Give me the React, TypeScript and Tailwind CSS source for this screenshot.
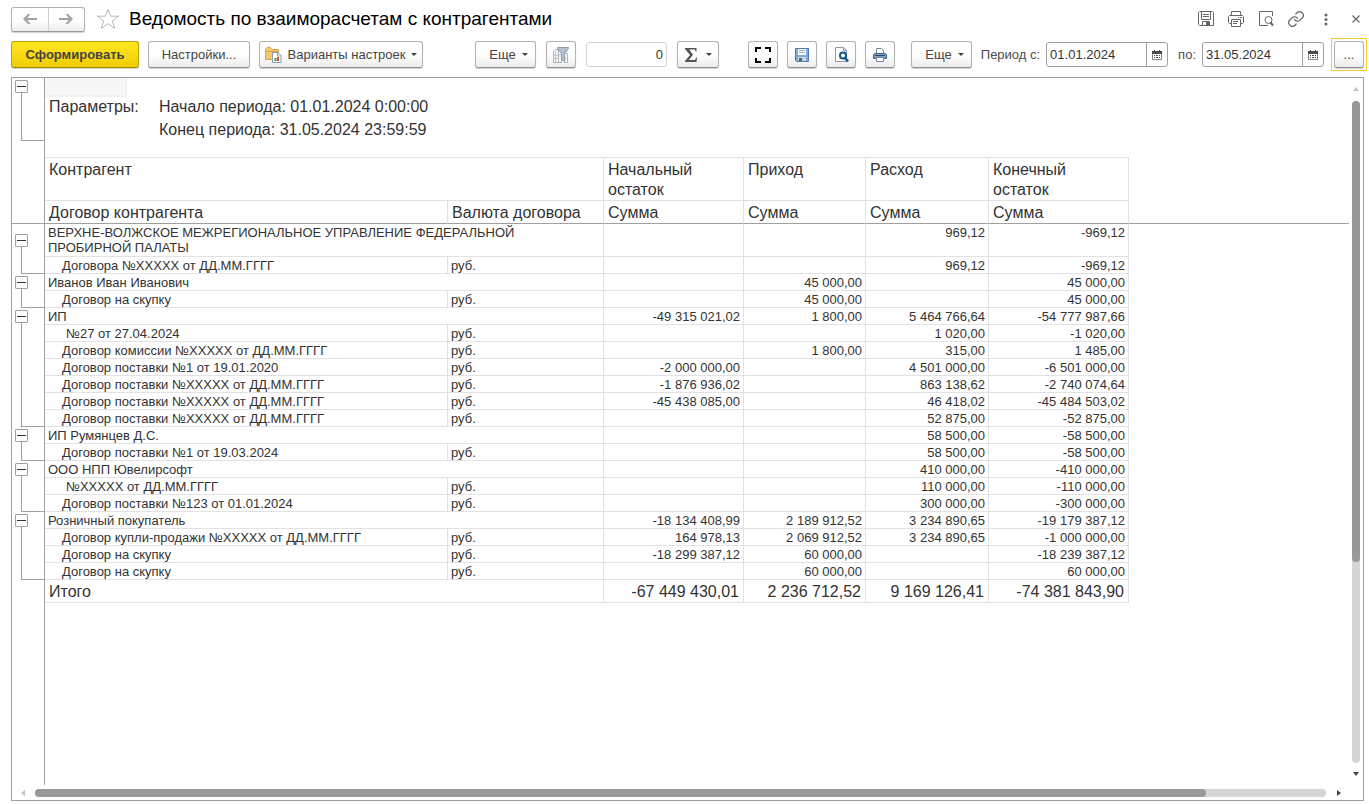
import type { ReactNode } from "react";

type Row = {
  name: string;
  level: 0 | 1;
  indent?: boolean;
  tall?: boolean;
  last?: boolean;
  sums: [string, string, string, string];
};

const rows: Row[] = [
  { name: "ВЕРХНЕ-ВОЛЖСКОЕ МЕЖРЕГИОНАЛЬНОЕ УПРАВЛЕНИЕ ФЕДЕРАЛЬНОЙ\nПРОБИРНОЙ ПАЛАТЫ", level: 0, tall: true, sums: ["", "", "969,12", "-969,12"] },
  { name: "Договора №XXXXX от ДД.ММ.ГГГГ", level: 1, last: true, sums: ["", "", "969,12", "-969,12"] },
  { name: "Иванов Иван Иванович", level: 0, sums: ["", "45 000,00", "", "45 000,00"] },
  { name: "Договор на скупку", level: 1, last: true, sums: ["", "45 000,00", "", "45 000,00"] },
  { name: "ИП", level: 0, sums: ["-49 315 021,02", "1 800,00", "5 464 766,64", "-54 777 987,66"] },
  { name: "№27 от 27.04.2024", level: 1, indent: true, sums: ["", "", "1 020,00", "-1 020,00"] },
  { name: "Договор комиссии №XXXXX от ДД.ММ.ГГГГ", level: 1, sums: ["", "1 800,00", "315,00", "1 485,00"] },
  { name: "Договор поставки №1 от 19.01.2020", level: 1, sums: ["-2 000 000,00", "", "4 501 000,00", "-6 501 000,00"] },
  { name: "Договор поставки №XXXXX от ДД.ММ.ГГГГ", level: 1, sums: ["-1 876 936,02", "", "863 138,62", "-2 740 074,64"] },
  { name: "Договор поставки №XXXXX от ДД.ММ.ГГГГ", level: 1, sums: ["-45 438 085,00", "", "46 418,02", "-45 484 503,02"] },
  { name: "Договор поставки №XXXXX от ДД.ММ.ГГГГ", level: 1, last: true, sums: ["", "", "52 875,00", "-52 875,00"] },
  { name: "ИП Румянцев Д.С.", level: 0, sums: ["", "", "58 500,00", "-58 500,00"] },
  { name: "Договор поставки №1 от 19.03.2024", level: 1, last: true, sums: ["", "", "58 500,00", "-58 500,00"] },
  { name: "ООО НПП Ювелирсофт", level: 0, sums: ["", "", "410 000,00", "-410 000,00"] },
  { name: "№XXXXX от ДД.ММ.ГГГГ", level: 1, indent: true, sums: ["", "", "110 000,00", "-110 000,00"] },
  { name: "Договор поставки №123 от 01.01.2024", level: 1, last: true, sums: ["", "", "300 000,00", "-300 000,00"] },
  { name: "Розничный покупатель", level: 0, sums: ["-18 134 408,99", "2 189 912,52", "3 234 890,65", "-19 179 387,12"] },
  { name: "Договор купли-продажи №XXXXX от ДД.ММ.ГГГГ", level: 1, sums: ["164 978,13", "2 069 912,52", "3 234 890,65", "-1 000 000,00"] },
  { name: "Договор на скупку", level: 1, sums: ["-18 299 387,12", "60 000,00", "", "-18 239 387,12"] },
  { name: "Договор на скупку", level: 1, last: true, sums: ["", "60 000,00", "", "60 000,00"] },
];

const totals = ["-67 449 430,01", "2 236 712,52", "9 169 126,41", "-74 381 843,90"];

const buttonBase =
  "flex h-[27px] shrink-0 items-center justify-center whitespace-nowrap rounded-[3px] border border-[#b2b2b2] border-b-[#8f8f8f] bg-linear-to-b from-white from-50% to-[#ececec] text-[13px] text-[#444444] shadow-[0_1px_1px_#d0d0d0]";

function IconButton({ label, children }: { label: string; children: ReactNode }) {
  return (
    <button type="button" aria-label={label} className={`${buttonBase} w-[30px]`}>
      {children}
    </button>
  );
}

function Caret() {
  return (
    <svg width="6" height="3" viewBox="0 0 6 3" fill="#444444" aria-hidden="true">
      <path d="M0 0h6L3 3z" />
    </svg>
  );
}

function Toggle() {
  return (
    <button
      type="button"
      aria-label="Свернуть группу"
      className="flex size-[13px] shrink-0 items-center justify-center rounded-[1px] border border-[#a0a0a0] bg-white"
    >
      <span className="h-px w-[9px] bg-[#333333]" />
    </button>
  );
}

function GroupMark({ row }: { row: Row }) {
  if (row.level === 0) {
    return (
      <div className="ml-[3px] flex h-full w-[13px] flex-col items-center">
        <span className="flex-1" />
        <Toggle />
        <span className="w-px flex-1 bg-[#a0a0a0]" />
      </div>
    );
  }
  return <div className={`ml-[9px] h-full border-l border-[#a0a0a0] ${row.last ? "border-b" : ""}`} />;
}

function DateField({ id, label, value }: { id: string; label: string; value: string }) {
  return (
    <div className="flex items-center gap-[6px]">
      <label htmlFor={id} className="whitespace-nowrap text-[#4d4d4d]">
        {label}
      </label>
      <div className="flex h-[25px] w-[122px] items-stretch rounded-[3px] border border-[#a0a0a0] bg-white">
        <input id={id} type="text" defaultValue={value} className="w-0 min-w-0 flex-1 px-[3px] text-[13px] text-[#333333] outline-none" />
        <button type="button" aria-label="Выбрать дату" className="flex w-[21px] items-center justify-center border-l border-[#a0a0a0]">
          <svg width="10" height="10" viewBox="0 0 10 10" aria-hidden="true" shapeRendering="crispEdges">
            <path fill="#4a4a4a" d="M2 0h1v1h4V0h1v1h2v3H0V1h2z" />
            <path fill="#8a8a8a" d="M0 4h1v5h8V4h1v6H0z" />
            <path fill="#4a4a4a" d="M2 5h1v1H2zM4 5h2v1H4zM7 5h1v1H7zM2 7h1v1H2zM4 7h2v1H4zM7 7h1v1H7z" />
          </svg>
        </button>
      </div>
    </div>
  );
}

function TitleIcon({ label, children }: { label: string; children: ReactNode }) {
  return (
    <button type="button" aria-label={label} className="flex size-4 items-center justify-center text-[#666666]">
      {children}
    </button>
  );
}

function TitleBar() {
  return (
    <header className="flex h-[38px] items-center">
      <div className="flex h-[25px] w-[74px] rounded-[3px] border border-[#b2b2b2] border-b-[#999999] bg-linear-to-b from-white from-50% to-[#eeeeee] shadow-[0_1px_1px_#d0d0d0]">
        <button type="button" aria-label="Назад" className="flex flex-1 items-center justify-center border-r border-[#d0d0d0]">
          <svg width="14" height="10" viewBox="0 0 14 10" fill="#a3a3a3" aria-hidden="true">
            <path d="M0 5l5-5h2.500L4.500 4H14v2H4.500l3 4H5z" />
          </svg>
        </button>
        <button type="button" aria-label="Вперед" className="flex flex-1 items-center justify-center">
          <svg width="14" height="10" viewBox="0 0 14 10" fill="#a3a3a3" aria-hidden="true">
            <path d="M14 5L9 0H6.500l3 4H0v2h9.500l-3 4H9z" />
          </svg>
        </button>
      </div>
      <button type="button" aria-label="В избранное" className="ml-[11px]">
        <svg width="24" height="22" viewBox="0 0 24 22" fill="white" stroke="#b4bac2" strokeWidth="1" aria-hidden="true">
          <path d="M12 1.2l2.700 7h8.100l-6.500 4.600 2.500 7.700-6.800-4.800-6.800 4.800 2.500-7.700L1.200 8.200h8.100z" />
        </svg>
      </button>
      <h1 className="ml-[9px] whitespace-nowrap text-[19px] text-black">Ведомость по взаиморасчетам с контрагентами</h1>
      <div className="ml-auto flex items-center gap-[14px]">
        <TitleIcon label="Сохранить">
          <svg width="16" height="16" viewBox="0 0 16 16" fill="none" stroke="currentColor" aria-hidden="true">
            <path d="M1.500.5h13l1 1v13H1.500l-1-1v-12z" />
            <path d="M3.500.5v8h9v-8M5 3.500h6M5 5.500h6M4.500 14.500v-4h7v4" />
            <path fill="currentColor" stroke="none" d="M8 11h3v3H8z" />
          </svg>
        </TitleIcon>
        <TitleIcon label="Печать">
          <svg width="16" height="16" viewBox="0 0 16 16" fill="none" stroke="currentColor" aria-hidden="true">
            <path d="M3.500 4.500v-4h9v4M3.500 12.500h-2l-1-1v-6l1-1h13l1 1v6l-1 1h-2" />
            <path d="M3.500 8.500h9v7h-9zM5 10.500h5M5 12.500h4M10 6.500h1M12 6.500h2" />
          </svg>
        </TitleIcon>
        <TitleIcon label="Предварительный просмотр">
          <svg width="16" height="16" viewBox="0 0 16 16" fill="none" stroke="currentColor" aria-hidden="true">
            <path d="M14.500 5V.5H1.500v14H10" />
            <circle cx="10.500" cy="9" r="3.500" />
            <path strokeWidth="2" d="M12.500 11.500l2.500 3" />
          </svg>
        </TitleIcon>
        <TitleIcon label="Получить ссылку">
          <svg width="16" height="16" viewBox="1 1 22 22" fill="none" stroke="currentColor" strokeWidth="1.700" strokeLinecap="round" aria-hidden="true">
            <path d="M10 13a5 5 0 0 0 7.540.540l3-3a5 5 0 0 0-7.070-7.070l-1.720 1.710" />
            <path d="M14 11a5 5 0 0 0-7.540-.540l-3 3a5 5 0 0 0 7.070 7.070l1.710-1.710" />
          </svg>
        </TitleIcon>
        <TitleIcon label="Еще">
          <svg width="4" height="13" viewBox="0 0 4 13" fill="currentColor" aria-hidden="true">
            <circle cx="2" cy="2" r="1.500" />
            <circle cx="2" cy="6.500" r="1.500" />
            <circle cx="2" cy="11" r="1.500" />
          </svg>
        </TitleIcon>
        <TitleIcon label="Закрыть">
          <svg width="8" height="8" viewBox="0 0 8 8" stroke="currentColor" strokeWidth="1.200" aria-hidden="true">
            <path d="M.5.5l7 7M7.500.5l-7 7" />
          </svg>
        </TitleIcon>
      </div>
    </header>
  );
}

function Toolbar() {
  return (
    <div className="flex h-[33px] items-center text-[13px]">
      <div className="flex gap-[9px]">
        <button
          type="button"
          className="flex h-[27px] w-32 items-center justify-center rounded-[3px] border border-[#b9a30e] border-b-[#998700] bg-linear-to-b from-[#ffe81f] to-[#f0cc00] text-[13px] font-bold text-[#444444] shadow-[0_1px_1px_#d0d0d0]"
        >
          Сформировать
        </button>
        <button type="button" className={`${buttonBase} w-[102px]`}>
          Настройки...
        </button>
        <button type="button" className={`${buttonBase} w-[164px] gap-[6px]`}>
          <svg width="17" height="17" viewBox="0 0 17 17" aria-hidden="true">
            <path fill="#f3c969" stroke="#d5a54b" d="M.5 13.500v-10l1.500-2h3.500l1.500 2h6.500v10z" />
            <path fill="#fbe3a4" stroke="#d5a54b" d="M.5 5.500h13" />
            <path fill="#ffffff" stroke="#8a9bb0" d="M7.500 6.500h5.500l3 3v7H7.500z" />
            <path fill="none" stroke="#8a9bb0" d="M12.500 6.500v3.500H16" />
            <path fill="#d9463d" d="M12 11h2v4h-2z" />
            <path fill="#3f9b57" d="M9.500 12h2v3h-2z" />
          </svg>
          <span>Варианты настроек</span>
          <Caret />
        </button>
      </div>

      <div className="ml-[52px] flex items-center gap-[10px]">
        <button type="button" className={`${buttonBase} w-[61px] gap-[6px] pl-[6px]`}>
          <span>Еще</span>
          <Caret />
        </button>
        <IconButton label="Фильтр">
          <svg width="16" height="16" viewBox="0 0 16 16" aria-hidden="true">
            <path fill="#f3f4f5" stroke="#b0b6bc" d="M.5 4.500l2-2h3v13h-5zM11.500 6.500h3v9h-3zM5.500 7.500h3v8h-3z" />
            <path stroke="#c3c8cd" d="M2.500 4v11M.5 8.500h5M.5 11.500h5M11.500 11.500h3" />
            <path fill="#b5c3d1" stroke="#8d9aa7" d="M4.500.5h11v1l-4 5v8l-3-2V6.500l-4-5z" />
          </svg>
        </IconButton>
        <input
          type="text"
          aria-label="Сумма выделенных ячеек"
          defaultValue="0"
          className="h-[25px] w-[81px] rounded-[3px] border border-[#d4d4d4] px-[3px] text-right text-[13px] text-[#333333] outline-none"
        />
        <button type="button" aria-label="Сумма" className={`${buttonBase} w-[42px] gap-[9px]`}>
          <svg width="12" height="14" viewBox="0 0 12 14" fill="#555555" aria-hidden="true">
            <path d="M0 0h11.500v3.500h-1L10 1.500H4.300L8 6.700 3.800 12h6.400l.8-2.500h1L11.500 14H0v-1l5-6L0 1z" />
          </svg>
          <Caret />
        </button>
      </div>

      <div className="ml-[29px] flex gap-[9px]">
        <IconButton label="На весь экран">
          <svg width="16" height="16" viewBox="0 0 16 16" fill="none" stroke="#000000" strokeWidth="2" aria-hidden="true">
            <path d="M6 1H1v4M10 1h5v4M6 15H1v-4M10 15h5v-4" />
          </svg>
        </IconButton>
        <IconButton label="Сохранить отчет">
          <svg width="14" height="14" viewBox="0 0 14 14" aria-hidden="true">
            <path fill="#7faadb" stroke="#4f7cab" d="M.5.5h13v13h-12l-1-1z" />
            <path fill="#f7f9fa" d="M3 1h8v6H3z" />
            <path stroke="#a3abb2" d="M4 2.500h6M4 4.500h6" />
            <path fill="#cfd3d5" d="M3 9h8v4H3z" />
            <path fill="#44688c" d="M4 10h3v3H4z" />
          </svg>
        </IconButton>
        <IconButton label="Просмотр отчета">
          <svg width="16" height="16" viewBox="0 0 16 16" fill="none" aria-hidden="true">
            <path fill="#ffffff" stroke="#8a9aa8" d="M2.500.5h8l3 3v11h-11z" />
            <path stroke="#8a9aa8" d="M10.500.5v3h3" />
            <circle cx="10" cy="8.500" r="3" fill="#ffffff" stroke="#0e5687" strokeWidth="2" />
            <path stroke="#0e5687" strokeWidth="2.500" d="M12 11l3 3.500" />
          </svg>
        </IconButton>
        <IconButton label="Печать отчета">
          <svg width="14" height="14" viewBox="0 0 14 14" aria-hidden="true">
            <path fill="#ffffff" stroke="#77889a" d="M3.500 5.500v-5h5l2 2v3" />
            <path fill="#7ba0c6" stroke="#42698f" d="M1.500 5.500h11l1 1v4H.5v-4z" />
            <path stroke="#29486a" strokeWidth="1" d="M2 7.500h10" />
            <path fill="#ffffff" stroke="#77889a" d="M3.500 9.500h7v4h-7z" />
          </svg>
        </IconButton>
      </div>

      <button type="button" className={`${buttonBase} ml-[16px] w-[61px] gap-[6px] pl-[6px]`}>
        <span>Еще</span>
        <Caret />
      </button>

      <div className="ml-auto flex items-center gap-[10px]">
        <DateField id="period-from" label="Период с:" value="01.01.2024" />
        <DateField id="period-to" label="по:" value="31.05.2024" />
        <div className="-m-[3px] border border-[#f5cb2e] p-[2px]">
          <IconButton label="Выбрать период">...</IconButton>
        </div>
      </div>
    </div>
  );
}

const gutter = "h-px border-r border-[#a0a0a0] p-0 align-top";
const headCell = "border-r border-b border-[#e2e2e2] px-1 text-left align-top text-[16px] leading-[20px] font-normal";

function ReportTable() {
  return (
    <table className="w-full table-fixed border-separate border-spacing-0 text-[#333333]">
      <colgroup>
        <col className="w-[33px]" />
        <col className="w-[403px]" />
        <col className="w-[156px]" />
        <col className="w-[140px]" />
        <col className="w-[122px]" />
        <col className="w-[123px]" />
        <col className="w-[140px]" />
        <col />
      </colgroup>
      <thead>
        <tr className="h-[79px]">
          <td className={gutter}>
            <div className="ml-[3px] pt-[2px]">
              <Toggle />
              <div className="ml-[6px] h-12 border-b border-l border-[#a0a0a0]" />
            </div>
          </td>
          <td colSpan={7} className="p-0 align-top">
            <div className="h-[19px] w-[82px] border-r-2 border-b-2 border-[#f1f1f1] bg-[#f7f7f7]" />
            <dl className="-mt-[2px] flex pl-1 text-[16px] leading-[23px]">
              <dt className="w-[110px]">Параметры:</dt>
              <dd>
                Начало периода: 01.01.2024 0:00:00
                <br />
                Конец периода: 31.05.2024 23:59:59
              </dd>
            </dl>
          </td>
        </tr>
        <tr className="h-[44px]">
          <td className={gutter} />
          <th colSpan={2} className={`${headCell} border-t pt-[2px]`}>Контрагент</th>
          <th className={`${headCell} border-t pt-[2px]`}>Начальный остаток</th>
          <th className={`${headCell} border-t pt-[2px]`}>Приход</th>
          <th className={`${headCell} border-t pt-[2px]`}>Расход</th>
          <th className={`${headCell} border-t pt-[2px]`}>Конечный остаток</th>
          <td />
        </tr>
        <tr className="h-[23px]">
          <td className={`${gutter} border-b`} />
          <th className={`${headCell} border-b-[#a0a0a0] pt-[2px]`}>Договор контрагента</th>
          <th className={`${headCell} border-b-[#a0a0a0] pt-[2px]`}>Валюта договора</th>
          <th className={`${headCell} border-b-[#a0a0a0] pt-[2px]`}>Сумма</th>
          <th className={`${headCell} border-b-[#a0a0a0] pt-[2px]`}>Сумма</th>
          <th className={`${headCell} border-b-[#a0a0a0] pt-[2px]`}>Сумма</th>
          <th className={`${headCell} border-b-[#a0a0a0] pt-[2px]`}>Сумма</th>
          <td className="border-b border-[#a0a0a0]" />
        </tr>
      </thead>
      <tbody className="text-[13px] leading-[15px]">
        {rows.map((row, i) => (
          <tr key={i} className={row.tall ? "h-[33px]" : "h-[17px]"}>
            <td className={gutter}>
              <GroupMark row={row} />
            </td>
            <td
              colSpan={row.level === 0 ? 2 : 1}
              className={`border-r border-b border-[#e2e2e2] pt-px pr-0 pb-0 align-top whitespace-pre-line ${
                row.level === 0 ? "pl-[3px]" : row.indent ? "pl-[21px]" : "pl-[17px]"
              }`}
            >
              {row.name}
            </td>
            {row.level === 1 && <td className="border-r border-b border-[#e2e2e2] pt-px pr-0 pb-0 pl-[3px] align-top">руб.</td>}
            {row.sums.map((sum, j) => (
              <td key={j} className="border-r border-b border-[#e2e2e2] pt-px pr-[3px] pb-0 pl-0 text-right align-top whitespace-nowrap">
                {sum}
              </td>
            ))}
            <td />
          </tr>
        ))}
      </tbody>
      <tfoot className="text-[16px] leading-[20px]">
        <tr className="h-[23px]">
          <td className={gutter} />
          <th colSpan={2} className="border-r border-b border-[#e2e2e2] px-1 pt-[2px] pb-0 text-left font-normal">Итого</th>
          {totals.map((sum) => (
            <td key={sum} className="border-r border-b border-[#e2e2e2] px-1 pt-[2px] pb-0 text-right whitespace-nowrap">
              {sum}
            </td>
          ))}
          <td />
        </tr>
      </tfoot>
    </table>
  );
}

export default function App() {
  return (
    <div className="flex h-screen flex-col bg-white pr-[5px] pb-[3px] pl-[11px] font-['Liberation_Sans',Arial,sans-serif]">
      <TitleBar />
      <Toolbar />
      <main className="mt-[6px] flex min-h-0 flex-1 flex-col border border-[#a0a0a0]">
        <div className="flex min-h-0 flex-1">
          <div className="flex min-w-0 flex-1 flex-col overflow-hidden">
            <ReportTable />
            <div className="w-[33px] flex-1 border-r border-[#a0a0a0]" />
          </div>
          <div className="flex w-[14px] flex-col items-center pt-[9px]">
            <button type="button" aria-label="Вверх" className="flex h-[14px] items-start">
              <svg width="6" height="4" viewBox="0 0 6 4" fill="#c0c0c0" aria-hidden="true">
                <path d="M0 4h6L3 0z" />
              </svg>
            </button>
            <div className="flex w-2 flex-1 flex-col rounded-full bg-[#d5d5d5]">
              <div className="flex-[23] rounded-full bg-[#999999]" />
              <div className="flex-[10]" />
            </div>
            <button type="button" aria-label="Вниз" className="flex h-[22px] items-center">
              <svg width="6" height="4" viewBox="0 0 6 4" fill="#444444" aria-hidden="true">
                <path d="M0 0h6L3 4z" />
              </svg>
            </button>
          </div>
        </div>
        <div className="flex h-[15px] items-center pr-[22px] pl-[9px]">
          <button type="button" aria-label="Влево" className="flex w-[14px]">
            <svg width="4" height="6" viewBox="0 0 4 6" fill="#c0c0c0" aria-hidden="true">
              <path d="M4 0v6L0 3z" />
            </svg>
          </button>
          <div className="flex h-2 flex-1 rounded-full bg-[#d5d5d5]">
            <div className="flex-[39] rounded-full bg-[#999999]" />
            <div className="flex-[4]" />
          </div>
          <button type="button" aria-label="Вправо" className="flex w-[15px] justify-end">
            <svg width="4" height="6" viewBox="0 0 4 6" fill="#444444" aria-hidden="true">
              <path d="M0 0v6l4-3z" />
            </svg>
          </button>
        </div>
      </main>
    </div>
  );
}
